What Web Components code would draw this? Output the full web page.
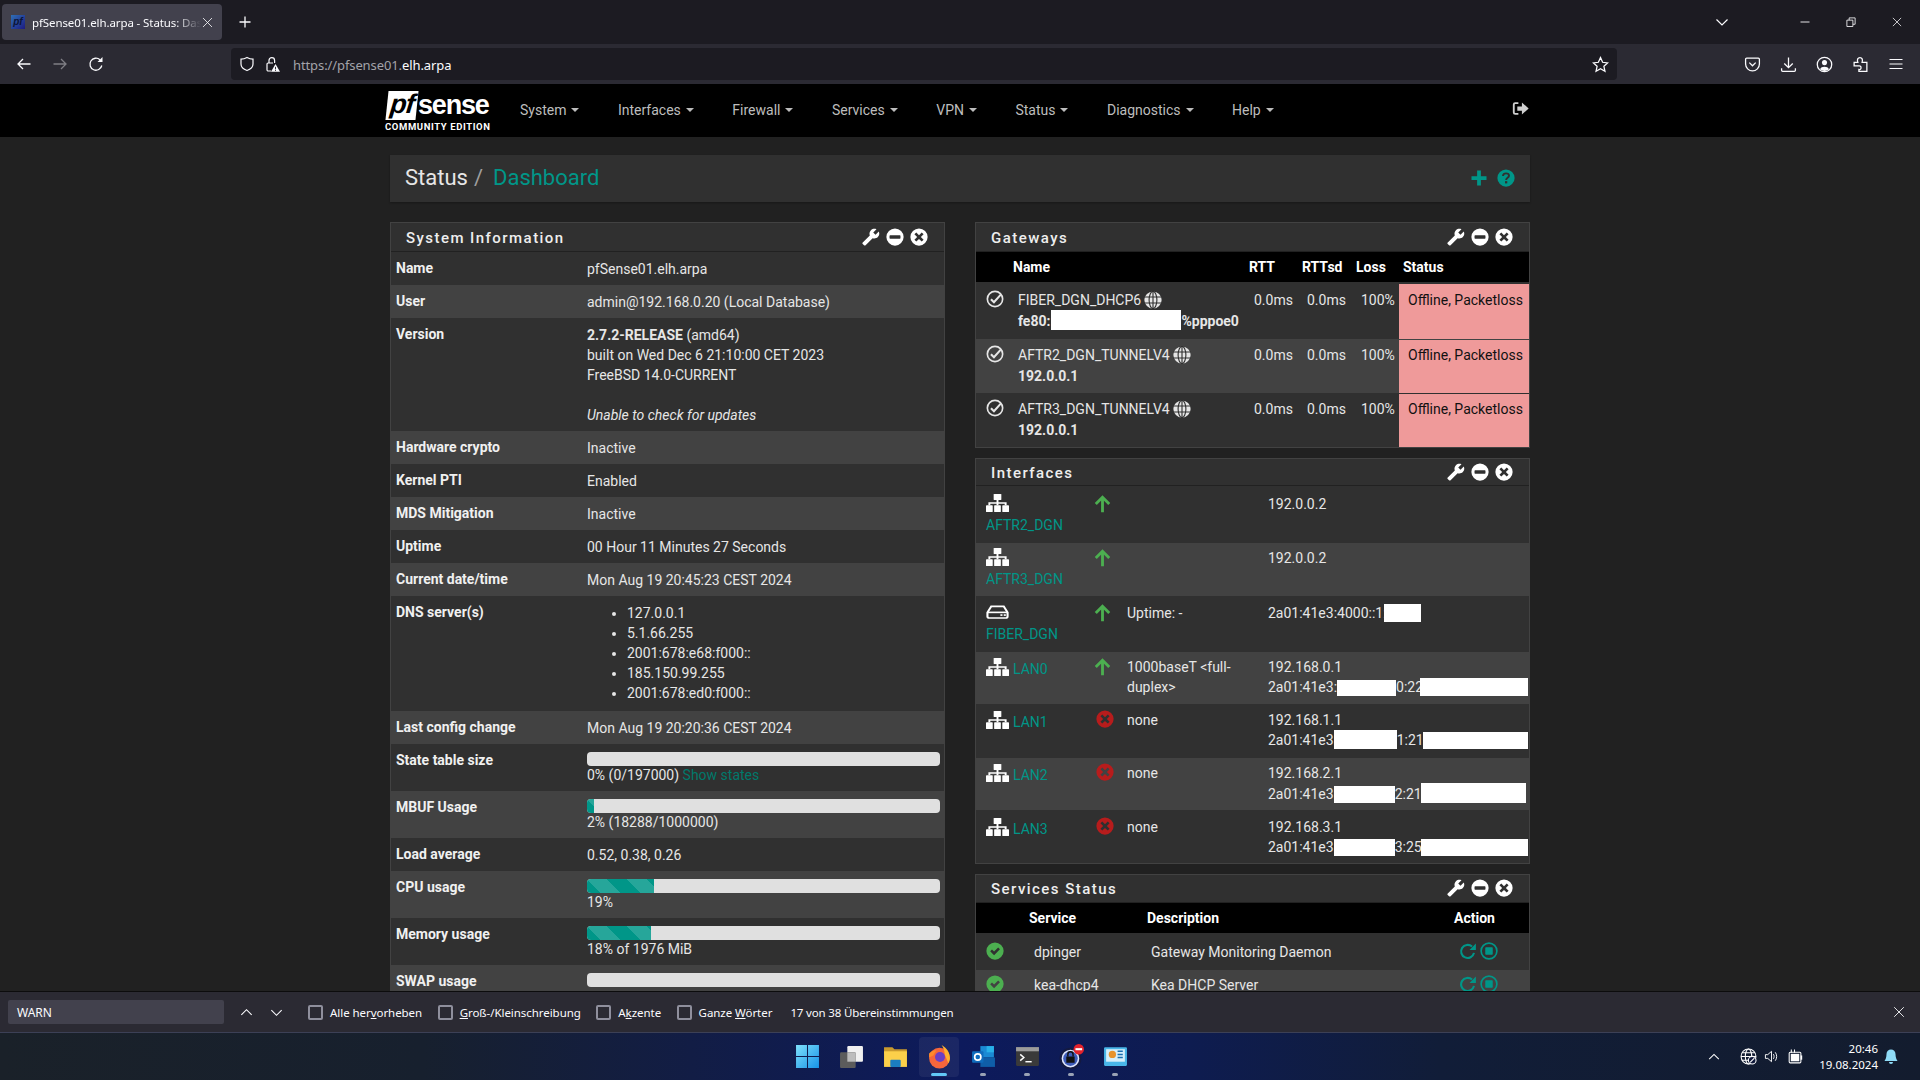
<!DOCTYPE html>
<html lang="de">
<head>
<meta charset="utf-8">
<title>pfSense01.elh.arpa - Status: Dashboard</title>
<style>
  html, body { margin: 0; height: 100%; overflow: hidden; background: #212121; }
  body { display: flex; flex-direction: column; font-family: Roboto, "Liberation Sans", sans-serif; }
</style>
</head>
<body>
<browser-tabs></browser-tabs>
<browser-toolbar></browser-toolbar>
<pf-page>
  <pf-navbar slot="nav"></pf-navbar>
  <pf-breadcrumb slot="crumb"></pf-breadcrumb>

  <pf-panel slot="left" heading="System Information">
    <info-row label="Name">pfSense01.elh.arpa</info-row>
    <info-row label="User">admin@192.168.0.20 (Local Database)</info-row>
    <info-row label="Version"><b>2.7.2-RELEASE</b> (amd64)<br>built on Wed Dec 6 21:10:00 CET 2023<br>FreeBSD 14.0-CURRENT<br><br><i>Unable to check for updates</i></info-row>
    <info-row label="Hardware crypto">Inactive</info-row>
    <info-row label="Kernel PTI">Enabled</info-row>
    <info-row label="MDS Mitigation">Inactive</info-row>
    <info-row label="Uptime">00 Hour 11 Minutes 27 Seconds</info-row>
    <info-row label="Current date/time">Mon Aug 19 20:45:23 CEST 2024</info-row>
    <info-row label="DNS server(s)" style="--h:115px"><pf-bullets items="127.0.0.1|5.1.66.255|2001:678:e68:f000::|185.150.99.255|2001:678:ed0:f000::"></pf-bullets></info-row>
    <info-row label="Last config change">Mon Aug 19 20:20:36 CEST 2024</info-row>
    <info-row label="State table size"><pf-progress value="0"></pf-progress>0% (0/197000) <pf-link>Show states</pf-link></info-row>
    <info-row label="MBUF Usage"><pf-progress value="2"></pf-progress>2% (18288/1000000)</info-row>
    <info-row label="Load average">0.52, 0.38, 0.26</info-row>
    <info-row label="CPU usage"><pf-progress value="19"></pf-progress>19%</info-row>
    <info-row label="Memory usage"><pf-progress value="18"></pf-progress>18% of 1976 MiB</info-row>
    <info-row label="SWAP usage"><pf-progress value="0" style="margin-bottom:2px"></pf-progress>0% of 1024 MiB</info-row>
  </pf-panel>

  <pf-panel slot="right" heading="Gateways">
    <gateway-head></gateway-head>
    <gateway-row name="FIBER_DGN_DHCP6" style="--h:57px;--pt:8px;--st:2px;--nb:0px">fe80:<pf-redact w="130" h="20" gap="1"></pf-redact>%pppoe0</gateway-row>
    <gateway-row name="AFTR2_DGN_TUNNELV4" style="--h:54px;--pt:6px;--st:1px">192.0.0.1</gateway-row>
    <gateway-row name="AFTR3_DGN_TUNNELV4" style="--h:54px;--pt:6px;--st:1px">192.0.0.1</gateway-row>
  </pf-panel>

  <pf-panel slot="right" heading="Interfaces" style="--hh:26px">
    <iface-row icon="sitemap" name="AFTR2_DGN" stack status="up" style="--h:57px;--pt:8px">192.0.0.2</iface-row>
    <iface-row icon="sitemap" name="AFTR3_DGN" stack status="up" style="--h:53px;--pt:5px">192.0.0.2</iface-row>
    <iface-row icon="hdd" name="FIBER_DGN" stack status="up" media="Uptime: -" style="--h:56px;--pt:7px">2a01:41e3:4000::1:<pf-redact w="37" h="18" gap="-3"></pf-redact></iface-row>
    <iface-row icon="sitemap" name="LAN0" status="up" media="1000baseT &amp;lt;full-duplex&amp;gt;" style="--h:52px;--pt:5px">192.168.0.1<br>2a01:41e3:<pf-redact w="59" h="16"></pf-redact>0:22<pf-redact w="108" h="18" gap="-3"></pf-redact></iface-row>
    <iface-row icon="sitemap" name="LAN1" status="down" media="none" style="--h:54px;--pt:6px">192.168.1.1<br>2a01:41e3<pf-redact w="63" h="19"></pf-redact>1:21<pf-redact w="105" h="17" gap="-1"></pf-redact></iface-row>
    <iface-row icon="sitemap" name="LAN2" status="down" media="none" style="--h:52px;--pt:5px">192.168.2.1<br>2a01:41e3<pf-redact w="61" h="17"></pf-redact>2:21<pf-redact w="105" h="20" gap="-1"></pf-redact></iface-row>
    <iface-row icon="sitemap" name="LAN3" status="down" media="none" style="--h:53px;--pt:7px">192.168.3.1<br>2a01:41e3<pf-redact w="61" h="17"></pf-redact>3:25<pf-redact w="107" h="17" gap="-1"></pf-redact></iface-row>
  </pf-panel>

  <pf-panel slot="right" heading="Services Status" style="--hh:27px">
    <service-head></service-head>
    <service-row name="dpinger" description="Gateway Monitoring Daemon" style="--pt:9px"></service-row>
    <service-row name="kea-dhcp4" description="Kea DHCP Server" style="--pt:5px"></service-row>
  </pf-panel>
</pf-page>
<find-bar></find-bar>
<win-taskbar></win-taskbar>

<script>
const ICONS = {
  // pfSense widgets, 24 box
  wrench: `<path fill="currentColor" transform="matrix(-1 0 0 1 24 0)" d="M23 19.3l-9.4-9.4c.9-2.3.4-5-1.5-6.9-2-2-5-2.4-7.4-1.3L9 6 6 9 1.6 4.7C.4 7.1.9 10.1 2.9 12.1c1.9 1.9 4.6 2.4 6.9 1.5l9.4 9.4c.6.6 1.5.6 2.1 0l1.7-1.7c.6-.5.6-1.4 0-2z"/>`,
  minus: `<path fill="currentColor" fill-rule="evenodd" d="M12 .5a11.5 11.5 0 1 0 0 23a11.5 11.5 0 0 0 0-23zM5.5 9.8h13a.8.8 0 0 1 .8.8v2.8a.8.8 0 0 1-.8.8h-13a.8.8 0 0 1-.8-.8v-2.8a.8.8 0 0 1 .8-.8z"/>`,
  times: `<path fill="currentColor" fill-rule="evenodd" d="M12 .5a11.5 11.5 0 1 0 0 23a11.5 11.5 0 0 0 0-23zM8.4 5.9L12 9.5l3.6-3.6l2.5 2.5L14.5 12l3.6 3.6l-2.500 2.500L12 14.500l-3.600 3.600l-2.500-2.500L9.500 12L5.900 8.400z"/>`,
  checkO: `<circle cx="12" cy="12" r="10.2" fill="none" stroke="currentColor" stroke-width="2.2"/><path d="M6.6 12.2l4 4L20 5.8" fill="none" stroke="currentColor" stroke-width="2.8"/>`,
  checkDisc: `<path fill="currentColor" fill-rule="evenodd" d="M12 .5a11.5 11.5 0 1 0 0 23a11.5 11.5 0 0 0 0-23zM5.6 12.4l2.4-2.4l2.8 2.8l5.4-5.4l2.4 2.4l-7.8 7.8z"/>`,
  globe: `<circle cx="12" cy="12" r="11.5" fill="currentColor"/><g fill="none" stroke="#303030" stroke-width="1.5"><ellipse cx="12" cy="12" rx="5.2" ry="11.5"/><path d="M12 0v24M0 8h24M0 16h24"/></g>`,
  sitemap: `<g fill="currentColor"><rect x="8" y="0" width="8" height="8" rx=".8"/><rect x="0" y="15" width="7" height="9" rx=".8"/><rect x="8.500" y="15" width="7" height="9" rx=".8"/><rect x="17" y="15" width="7" height="9" rx=".8"/><path d="M11 8h2v3h8.500v4h-2v-2H13v2h-2v-2H4.500v2h-2v-4H11z"/></g>`,
  hdd: `<path d="M5.500 4.500h13l4 8v5.500a2 2 0 0 1-2 2h-17a2 2 0 0 1-2-2v-5.500z" fill="none" stroke="currentColor" stroke-width="2.200"/><path d="M2 12.500h20" stroke="currentColor" stroke-width="2.200"/><rect x="15" y="15" width="2.200" height="2.200" fill="currentColor"/><rect x="18.500" y="15" width="2.200" height="2.200" fill="currentColor"/>`,
  arrowUp: `<path d="M12 23V4M3.500 12.500L12 4l8.500 8.500" fill="none" stroke="currentColor" stroke-width="3.600"/>`,
  plus: `<path fill="currentColor" d="M9.500 2h5v7.500H22v5h-7.500V22h-5v-7.500H2v-5h7.500z"/>`,
  question: `<circle cx="12" cy="12" r="11.500" fill="currentColor"/><path d="M8 9.300c0-2.200 1.700-3.500 4-3.500s4 1.300 4 3.200c0 2.800-3.800 2.600-3.800 5.500" fill="none" stroke="#303030" stroke-width="2.600"/><rect x="10.700" y="16.200" width="3" height="3" fill="#303030"/>`,
  repeat: `<path d="M20 14.500a8.700 8.700 0 1 1-2.600-8.400" fill="none" stroke="currentColor" stroke-width="2.800"/><path fill="currentColor" d="M22.500 2v8.500H14z"/>`,
  stopO: `<circle cx="12" cy="12" r="10.500" fill="none" stroke="currentColor" stroke-width="2.200"/><rect x="7" y="7" width="10" height="10" rx="1" fill="currentColor"/>`,
  signOut: `<path d="M9 4.500H4.500a2 2 0 0 0-2 2v11a2 2 0 0 0 2 2H9" fill="none" stroke="currentColor" stroke-width="2.600"/><path fill="currentColor" d="M7.500 9H14V3.500L23.500 12L14 20.500V15H7.500z"/>`,
  // browser chrome, 16 box
  back: `<path d="M14.500 8H2M7 3L2 8l5 5" fill="none" stroke="currentColor" stroke-width="1.300"/>`,
  forward: `<path d="M1.500 8H14M9 3l5 5-5 5" fill="none" stroke="currentColor" stroke-width="1.300"/>`,
  reload: `<path d="M13.800 9.500A6 6 0 1 1 12 3.800" fill="none" stroke="currentColor" stroke-width="1.300"/><path fill="currentColor" d="M14.500 1v5h-5z"/>`,
  shield: `<path d="M8 1.500c2 1.200 4 1.700 6 1.700v4.800c0 3-2.400 5.300-6 6.500-3.600-1.200-6-3.500-6-6.500V3.200c2 0 4-.5 6-1.700z" fill="none" stroke="currentColor" stroke-width="1.200"/>`,
  lockWarn: `<path d="M5 7V4.500a2.800 2.800 0 0 1 5.600 0V7M9 7H4.200A1.200 1.200 0 0 0 3 8.200v5.600A1.200 1.200 0 0 0 4.200 15H7" fill="none" stroke="currentColor" stroke-width="1.200"/><path fill="currentColor" d="M11.500 8l4.500 7.800H7z"/><rect x="11.100" y="10.800" width=".9" height="2.600" fill="#1c1b22"/><rect x="11.100" y="14" width=".9" height=".9" fill="#1c1b22"/>`,
  star: `<path d="M8 1.500l2 4.400 4.700.6-3.500 3.200 1 4.700L8 12l-4.200 2.400 1-4.700L1.300 6.500 6 5.900z" fill="none" stroke="currentColor" stroke-width="1.200"/>`,
  pocket: `<path d="M2.500 2h11a1 1 0 0 1 1 1v4.500a6.500 6.500 0 0 1-13 0V3a1 1 0 0 1 1-1z" fill="none" stroke="currentColor" stroke-width="1.200"/><path d="M5 6.200l3 3 3-3" fill="none" stroke="currentColor" stroke-width="1.200"/>`,
  download: `<path d="M8 1.500v9M4 7l4 4 4-4M1.500 11.500v2a1 1 0 0 0 1 1h11a1 1 0 0 0 1-1v-2" fill="none" stroke="currentColor" stroke-width="1.200"/>`,
  account: `<circle cx="8" cy="8" r="6.800" fill="none" stroke="currentColor" stroke-width="1.200"/><circle cx="8" cy="6.200" r="2.400" fill="currentColor"/><path fill="currentColor" d="M3.800 12.500c.6-1.800 2.200-2.500 4.200-2.500s3.600.7 4.200 2.500A6 6 0 0 1 8 14.200a6 6 0 0 1-4.200-1.700z"/>`,
  puzzle: `<path d="M2 6h3.500c-1-2.800 0-4.500 2-4.500s2.800 1.700 2 4.500H14v8.500H6.500v-1.800c1.500.3 2-.7 2-1.700s-.7-2-2-1.700H2z" fill="none" stroke="currentColor" stroke-width="1.200"/>`,
  menu: `<path d="M1.500 3.500h13M1.500 8h13M1.500 12.500h13" stroke="currentColor" stroke-width="1.200"/>`,
  chevronDown: `<path d="M2.500 5.500L8 11l5.500-5.500" fill="none" stroke="currentColor" stroke-width="1.200"/>`,
  chevronUp: `<path d="M2.500 10.500L8 5l5.500 5.500" fill="none" stroke="currentColor" stroke-width="1.200"/>`,
  close: `<path d="M2.500 2.500l11 11M13.500 2.500l-11 11" stroke="currentColor" stroke-width="1"/>`,
  min: `<path d="M2 8h12" stroke="currentColor" stroke-width="1.200"/>`,
  restore: `<path d="M2.500 5.500h8V14h-8zM5.500 5.500V2.500h8V11h-3" fill="none" stroke="currentColor" stroke-width="1.100"/>`,
  newTab: `<path d="M8 2.500v11M2.500 8h11" stroke="currentColor" stroke-width="1.300"/>`,
  // tray
  trayGlobe: `<circle cx="8" cy="8" r="7" fill="none" stroke="currentColor" stroke-width="1"/><ellipse cx="8" cy="8" rx="3" ry="7" fill="none" stroke="currentColor" stroke-width="1"/><path d="M1 8h14M2 4.500h12M2 11.500h12" stroke="currentColor" stroke-width="1"/><circle cx="11.500" cy="11.500" r="3.600" fill="#10193a" stroke="currentColor"/><path d="M9.500 13.500l4-4" stroke="currentColor"/>`,
  speaker: `<path d="M1.500 6h2.500l4-3.500v11L4 10H1.500z" fill="none" stroke="currentColor"/><path d="M10 5.500c1 1.500 1 3.500 0 5M12 3.500c2 2.500 2 6.500 0 9" fill="none" stroke="currentColor"/>`,
  battery: `<rect x="3" y="4" width="11" height="10" rx="1" fill="none" stroke="currentColor"/><rect x="4.500" y="5.500" width="8" height="7" fill="currentColor"/><path d="M5 1.500v3M8 1.500v3" stroke="currentColor"/><path d="M14.500 7v4" stroke="currentColor" stroke-width="1.500"/>`,
  bell: `<path fill="currentColor" d="M8 .5a4.500 4.500 0 0 1 4.500 4.500c0 3.500 1 5.500 2 7H1.500c1-1.500 2-3.500 2-7A4.500 4.500 0 0 1 8 .5zM6 13h4a2 2 0 0 1-4 0z"/>`,
};

class PfIcon extends HTMLElement {
  constructor() {
    super();
    this.attachShadow({ mode: 'open' });
  }

  connectedCallback() {
    const name = this.getAttribute('name');
    const size = this.getAttribute('size') || 18;
    const height = this.getAttribute('h') || size;
    const box = this.getAttribute('box') || 24;
    this.shadowRoot.innerHTML = `
      <style>
        :host { display: inline-block; width: ${size}px; height: ${height}px; line-height: 0; flex: none; }
        svg { width: 100%; height: 100%; display: block; }
      </style>
      <svg viewBox="0 0 ${box} ${box}" preserveAspectRatio="none" aria-hidden="true">${ICONS[name]}</svg>
    `;
  }
}
customElements.define('pf-icon', PfIcon);

class BrowserTabs extends HTMLElement {
  constructor() {
    super();
    this.attachShadow({ mode: 'open' });
  }

  connectedCallback() {
    this.shadowRoot.innerHTML = `
      <style>
        :host { display: flex; align-items: center; height: 44px; background: #1c1b22; color: #fbfbfe;
          font: 11.500px "Noto Sans", "Open Sans", sans-serif; flex: none; }
        .tab { display: flex; align-items: center; margin-left: 2px; width: 220px; height: 36px; box-sizing: border-box;
          padding: 0 8px 0 9px; background: #42414d; border-radius: 4px; }
        .fav { width: 14px; height: 14px; background: linear-gradient(135deg, #2f6fb5, #1c1a80); color: #0c1538;
          font: italic bold 10px "Liberation Sans", sans-serif; line-height: 14px; text-align: center; flex: none; }
        .title { margin-left: 7px; flex: 1; overflow: hidden; white-space: nowrap; letter-spacing: -.1px;
          -webkit-mask-image: linear-gradient(90deg, #000 85%, transparent); mask-image: linear-gradient(90deg, #000 85%, transparent); }
        .new { margin-left: 15px; }
        .right { margin-left: auto; display: flex; align-items: center; }
        .chev { margin-right: 69px; }
        .win { margin-right: 34px; }
        .win:last-child { margin-right: 17px; }
      </style>
      <div class="tab">
        <div class="fav">pf</div>
        <div class="title">pfSense01.elh.arpa - Status: Dashboard</div>
        <pf-icon name="close" box="16" size="13"></pf-icon>
      </div>
      <pf-icon class="new" name="newTab" box="16" size="16"></pf-icon>
      <div class="right">
        <pf-icon class="chev" name="chevronDown" box="16" size="16"></pf-icon>
        <pf-icon class="win" name="min" box="16" size="12"></pf-icon>
        <pf-icon class="win" name="restore" box="16" size="12"></pf-icon>
        <pf-icon class="win" name="close" box="16" size="12"></pf-icon>
      </div>
    `;
  }
}
customElements.define('browser-tabs', BrowserTabs);

class BrowserToolbar extends HTMLElement {
  constructor() {
    super();
    this.attachShadow({ mode: 'open' });
  }

  connectedCallback() {
    this.shadowRoot.innerHTML = `
      <style>
        :host { display: flex; align-items: center; height: 40px; background: #2b2a33; color: #fbfbfe; flex: none;
          font: 13px "Noto Sans", "Open Sans", sans-serif; }
        .nav { display: flex; align-items: center; gap: 20px; padding-left: 16px; width: 231px; box-sizing: border-box; }
        .dim { opacity: .4; }
        .url { display: flex; align-items: center; height: 32px; width: 1386px; background: #1c1b22; border-radius: 4px;
          padding: 0 8px 0 8px; box-sizing: border-box; }
        .lock { margin-left: 9px; }
        .addr { margin-left: 13px; color: #a3a3a9; flex: 1; letter-spacing: -.1px; padding-top: 1px; }
        .addr span { color: #fbfbfe; }
        .tools { display: flex; align-items: center; gap: 19px; margin-left: 127px; }
      </style>
      <div class="nav">
        <pf-icon name="back" box="16" size="16"></pf-icon>
        <pf-icon class="dim" name="forward" box="16" size="16"></pf-icon>
        <pf-icon name="reload" box="16" size="16"></pf-icon>
      </div>
      <div class="url">
        <pf-icon name="shield" box="16" size="16"></pf-icon>
        <pf-icon class="lock" name="lockWarn" box="16" size="16"></pf-icon>
        <div class="addr">https://pfsense01.<span>elh.arpa</span></div>
        <pf-icon name="star" box="16" size="17"></pf-icon>
      </div>
      <div class="tools">
        <pf-icon name="pocket" box="16" size="17"></pf-icon>
        <pf-icon name="download" box="16" size="17"></pf-icon>
        <pf-icon name="account" box="16" size="17"></pf-icon>
        <pf-icon name="puzzle" box="16" size="17"></pf-icon>
        <pf-icon name="menu" box="16" size="16"></pf-icon>
      </div>
    `;
  }
}
customElements.define('browser-toolbar', BrowserToolbar);

class PfPage extends HTMLElement {
  constructor() {
    super();
    this.attachShadow({ mode: 'open' });
  }

  connectedCallback() {
    this.shadowRoot.innerHTML = `
      <style>
        :host { display: block; flex: 1; min-height: 0; overflow: hidden; background: #212121; }
        .container { width: 1140px; margin: 18px auto 0; }
        .columns { display: grid; grid-template-columns: 555px 555px; column-gap: 30px; margin-top: 20px; }
        ::slotted([slot="right"]) { margin-bottom: 10px; }
      </style>
      <slot name="nav"></slot>
      <div class="container">
        <slot name="crumb"></slot>
        <div class="columns">
          <div><slot name="left"></slot></div>
          <div><slot name="right"></slot></div>
        </div>
      </div>
    `;
  }
}
customElements.define('pf-page', PfPage);

class PfNavbar extends HTMLElement {
  constructor() {
    super();
    this.attachShadow({ mode: 'open' });
  }

  connectedCallback() {
    const items = ['System', 'Interfaces', 'Firewall', 'Services', 'VPN', 'Status', 'Diagnostics', 'Help'];
    this.shadowRoot.innerHTML = `
      <style>
        :host { display: flex; align-items: center; height: 53px; background: #000; padding-left: 385px; padding-right: 391px;
          box-sizing: border-box; color: #bdbdbd; font: 14px Roboto, sans-serif; }
        .logo { width: 105px; height: 40px; display: flex; flex-direction: column; flex: none; margin-right: 30px; padding-top: 1px; }
        .mark { display: flex; align-items: center; height: 29px; margin-left: 2px; }
        .pf { width: 30px; height: 29px; background: #fff; color: #000; font: italic bold 27px/27px "Liberation Sans", sans-serif;
          text-align: center; letter-spacing: -1px; transform: skewX(-6deg); }
        .sense { color: #fff; font: bold 27px/29px "Liberation Sans", sans-serif; letter-spacing: -1.200px; margin-left: 1px; }
        .ce { color: #fff; font: bold 9.500px/11px "Roboto", sans-serif; letter-spacing: .6px; margin-top: 1px; white-space: nowrap; }
        nav { display: flex; gap: 38.500px; flex: 1; padding-bottom: 2px; }
        nav span { display: inline-flex; align-items: center; gap: 5px; white-space: nowrap; }
        nav span::after { content: ''; border-top: 4px solid #bdbdbd; border-left: 4px solid transparent; border-right: 4px solid transparent; }
        .out { color: #cfcfcf; margin-bottom: 4px; }
      </style>
      <div class="logo">
        <div class="mark"><div class="pf">pf</div><div class="sense">sense</div></div>
        <div class="ce">COMMUNITY EDITION</div>
      </div>
      <nav>${items.map((i) => `<span>${i}</span>`).join('')}</nav>
      <pf-icon class="out" name="signOut" size="17"></pf-icon>
    `;
  }
}
customElements.define('pf-navbar', PfNavbar);

class PfBreadcrumb extends HTMLElement {
  constructor() {
    super();
    this.attachShadow({ mode: 'open' });
  }

  connectedCallback() {
    this.shadowRoot.innerHTML = `
      <style>
        :host { display: flex; align-items: center; height: 47px; background: #303030; padding: 0 15px 2px; box-sizing: border-box; font: 22px Roboto, sans-serif;
          color: #e6e6e6; box-shadow: 0 1px 2px rgba(0,0,0,.3); }
        .sep { color: #9e9e9e; margin: 0 10px 0 6px; }
        .cur { color: #009688; flex: 1; }
        .tools { display: flex; gap: 9px; color: #009688; align-items: center; }
      </style>
      <span>Status</span><span class="sep">/</span><span class="cur">Dashboard</span>
      <div class="tools"><pf-icon name="plus" size="18"></pf-icon><pf-icon name="question" size="18"></pf-icon></div>
    `;
  }
}
customElements.define('pf-breadcrumb', PfBreadcrumb);

class PfPanel extends HTMLElement {
  constructor() {
    super();
    this.attachShadow({ mode: 'open' });
  }

  connectedCallback() {
    this.shadowRoot.innerHTML = `
      <style>
        :host { display: block; background: #303030; border: 1px solid #424242; box-sizing: border-box; color: #e6e6e6;
          font: 14px/20px Roboto, sans-serif; }
        header { display: flex; align-items: center; height: var(--hh, 28px); padding: 0 16px 0 15px; border-bottom: 1px solid #212121; }
        h2 { margin: 0; flex: 1; font: 500 15px Roboto, sans-serif; letter-spacing: 1.450px; color: #eee; padding-top: 1px; }
        .tools { display: flex; align-items: center; gap: 6px; color: #fff; margin-top: -1px; }
      </style>
      <header>
        <h2>${this.getAttribute('heading')}</h2>
        <div class="tools"><pf-icon name="wrench"></pf-icon><pf-icon name="minus"></pf-icon><pf-icon name="times"></pf-icon></div>
      </header>
      <slot></slot>
    `;
  }
}
customElements.define('pf-panel', PfPanel);

class InfoRow extends HTMLElement {
  constructor() {
    super();
    this.attachShadow({ mode: 'open' });
  }

  connectedCallback() {
    this.shadowRoot.innerHTML = `
      <style>
        :host { display: grid; grid-template-columns: 191px 1fr; box-sizing: border-box; min-height: var(--h, 33px);
          padding: 7px 4px 6px 5px; }
        :host(:nth-of-type(even)) { background: #424242; }
        .label { font-weight: 700; color: #f0f0f0; margin-top: -1px; }
        .value { min-width: 0; }
      </style>
      <div class="label">${this.getAttribute('label')}</div>
      <div class="value"><slot></slot></div>
    `;
  }
}
customElements.define('info-row', InfoRow);

class PfBullets extends HTMLElement {
  constructor() {
    super();
    this.attachShadow({ mode: 'open' });
  }

  connectedCallback() {
    const items = this.getAttribute('items').split('|');
    this.shadowRoot.innerHTML = `
      <style>
        :host { display: block; }
        ul { margin: 0; padding-left: 40px; }
      </style>
      <ul>${items.map((i) => `<li>${i}</li>`).join('')}</ul>
    `;
  }
}
customElements.define('pf-bullets', PfBullets);

class PfProgress extends HTMLElement {
  constructor() {
    super();
    this.attachShadow({ mode: 'open' });
  }

  connectedCallback() {
    const value = Number(this.getAttribute('value'));
    this.shadowRoot.innerHTML = `
      <style>
        :host { display: block; height: 14px; background: #e0e0e0; border-radius: 4px; overflow: hidden; margin: 1px 0 -1px; }
        .bar { height: 100%; width: ${value}%; background-color: #009688;
          background-image: linear-gradient(45deg, rgba(255,255,255,.15) 25%, transparent 25%, transparent 50%, rgba(255,255,255,.15) 50%, rgba(255,255,255,.15) 75%, transparent 75%, transparent);
          background-size: 40px 40px; }
      </style>
      <div class="bar"></div>
    `;
  }
}
customElements.define('pf-progress', PfProgress);

class PfLink extends HTMLElement {
  constructor() {
    super();
    this.attachShadow({ mode: 'open' }).innerHTML = `
      <style>:host { color: #00796b; }</style><slot></slot>
    `;
  }
}
customElements.define('pf-link', PfLink);

class PfRedact extends HTMLElement {
  constructor() {
    super();
    this.attachShadow({ mode: 'open' });
  }

  connectedCallback() {
    const gap = this.getAttribute('gap') || 0;
    this.shadowRoot.innerHTML = `
      <style>
        :host { display: inline-block; width: ${this.getAttribute('w')}px; height: ${this.getAttribute('h')}px; background: #fff;
          vertical-align: -4px; margin-left: ${gap}px; }
      </style>
    `;
  }
}
customElements.define('pf-redact', PfRedact);

class GatewayHead extends HTMLElement {
  constructor() {
    super();
    this.attachShadow({ mode: 'open' }).innerHTML = `
      <style>
        :host { display: grid; grid-template-columns: 32px 236px 53px 54px 48px 1fr; height: 30px; align-items: center;
          background: #000; color: #fff; font-weight: 700; }
        span { padding-left: 5px; }
      </style>
      <span></span><span>Name</span><span>RTT</span><span>RTTsd</span><span>Loss</span><span style="padding-left:4px">Status</span>
    `;
  }
}
customElements.define('gateway-head', GatewayHead);

class GatewayRow extends HTMLElement {
  constructor() {
    super();
    this.attachShadow({ mode: 'open' });
  }

  connectedCallback() {
    this.shadowRoot.innerHTML = `
      <style>
        :host { display: grid; grid-template-columns: 32px 236px 53px 54px 48px 1fr; height: var(--h, 54px); box-sizing: border-box; }
        :host(:nth-of-type(even)) { background: #424242; }
        .cell { padding: var(--pt, 5px) 0 0 10px; white-space: nowrap; }
        .ico { padding: var(--pt, 5px) 0 0 10px; }
        .name { display: flex; align-items: center; gap: 3px; height: 20px; margin-bottom: var(--nb, 1px); }
        .addr { font-weight: 700; }
        .status { margin-top: var(--st, 1px); background: #ef9a9a; color: #111; padding: calc(var(--pt, 5px) - var(--st, 1px)) 0 0 9px; white-space: nowrap; }
      </style>
      <div class="ico"><pf-icon name="checkO" size="18"></pf-icon></div>
      <div class="cell">
        <div class="name">${this.getAttribute('name')}<pf-icon name="globe" size="18"></pf-icon></div>
        <div class="addr"><slot></slot></div>
      </div>
      <div class="cell">0.0ms</div>
      <div class="cell">0.0ms</div>
      <div class="cell">100%</div>
      <div class="status">Offline, Packetloss</div>
    `;
  }
}
customElements.define('gateway-row', GatewayRow);

class IfaceRow extends HTMLElement {
  constructor() {
    super();
    this.attachShadow({ mode: 'open' });
  }

  connectedCallback() {
    const up = this.getAttribute('status') === 'up';
    const media = this.getAttribute('media') || '';
    const stack = this.hasAttribute('stack');
    this.shadowRoot.innerHTML = `
      <style>
        :host { display: grid; grid-template-columns: 117px 34px 141px 1fr; height: var(--h, 53px); box-sizing: border-box;
          padding-top: var(--pt, 6px); overflow: hidden; }
        :host(:nth-of-type(even)) { background: #424242; }
        .if { padding-left: 10px; color: #009688; ${stack ? '' : 'display: flex; gap: 4px; align-items: flex-start;'} }
        .if pf-icon { color: #fff; display: block; ${stack ? 'margin-bottom: 3px;' : 'margin-top: 1px;'} }
        .if span { display: block; ${stack ? '' : 'margin-top: 2px;'} }
        .up { color: #4caf50; }
        .down { color: #b71c1c; padding-left: 3px; }
        .media { padding-right: 4px; }
        .ip { white-space: nowrap; }
      </style>
      <div class="if"><pf-icon name="${this.getAttribute('icon')}" size="23" h="18"></pf-icon><span>${this.getAttribute('name')}</span></div>
      <div class="${up ? 'up' : 'down'}"><pf-icon name="${up ? 'arrowUp' : 'times'}" size="${up ? 19 : 18}"></pf-icon></div>
      <div class="media">${media}</div>
      <div class="ip"><slot></slot></div>
    `;
  }
}
customElements.define('iface-row', IfaceRow);

class ServiceHead extends HTMLElement {
  constructor() {
    super();
    this.attachShadow({ mode: 'open' }).innerHTML = `
      <style>
        :host { display: grid; grid-template-columns: 53px 118px 307px 1fr; height: 30px; align-items: center;
          background: #000; color: #fff; font-weight: 700; }
      </style>
      <span></span><span>Service</span><span>Description</span><span>Action</span>
    `;
  }
}
customElements.define('service-head', ServiceHead);

class ServiceRow extends HTMLElement {
  constructor() {
    super();
    this.attachShadow({ mode: 'open' });
  }

  connectedCallback() {
    this.shadowRoot.innerHTML = `
      <style>
        :host { display: grid; grid-template-columns: 58px 117px 308px 1fr; height: 37px; box-sizing: border-box; padding-top: var(--pt, 6px); }
        :host(:nth-of-type(even)) { background: #424242; }
        .ico { padding-left: 10px; color: #4caf50; line-height: 0; }
        .act { display: flex; gap: 3px; color: #009688; }
      </style>
      <div class="ico"><pf-icon name="checkDisc" size="18"></pf-icon></div>
      <div>${this.getAttribute('name')}</div>
      <div>${this.getAttribute('description')}</div>
      <div class="act"><pf-icon name="repeat" size="18"></pf-icon><pf-icon name="stopO" size="18"></pf-icon></div>
    `;
  }
}
customElements.define('service-row', ServiceRow);

class FindBar extends HTMLElement {
  constructor() {
    super();
    this.attachShadow({ mode: 'open' });
  }

  connectedCallback() {
    const opts = ['Alle her<u>v</u>orheben', '<u>G</u>roß-/Kleinschreibung', 'A<u>k</u>zente', 'Ganze <u>W</u>örter'];
    this.shadowRoot.innerHTML = `
      <style>
        :host { display: flex; align-items: center; height: 41px; background: #2b2a33; border-top: 1px solid #0c0c0d; box-sizing: border-box; flex: none;
          color: #fbfbfe; font: 11.500px "Noto Sans", "Open Sans", sans-serif; }
        .input { margin-left: 8px; width: 216px; height: 24px; box-sizing: border-box; padding-left: 9px; background: #42414d; border-radius: 2px;
          line-height: 25px; font-size: 12px; }
        .arrows { display: flex; gap: 15px; margin: 0 0 0 15px; }
        .opt { display: flex; align-items: center; gap: 7px; letter-spacing: -.05px; }
        .box { width: 15px; height: 15px; border: 2px solid #8f8f9d; border-radius: 2px; box-sizing: border-box; }
        .opts { display: flex; gap: 15.500px; margin-left: 24px; }
        .count { margin-left: 18px; flex: 1; letter-spacing: -.15px; }
        .x { margin-right: 14px; }
      </style>
      <div class="input">WARN</div>
      <div class="arrows"><pf-icon name="chevronUp" box="16" size="15"></pf-icon><pf-icon name="chevronDown" box="16" size="15"></pf-icon></div>
      <div class="opts">${opts.map((o) => `<div class="opt"><div class="box"></div><span>${o}</span></div>`).join('')}</div>
      <div class="count">17 von 38 Übereinstimmungen</div>
      <pf-icon class="x" name="close" box="16" size="14"></pf-icon>
    `;
  }
}
customElements.define('find-bar', FindBar);

class WinTaskbar extends HTMLElement {
  constructor() {
    super();
    this.attachShadow({ mode: 'open' });
  }

  connectedCallback() {
    this.shadowRoot.innerHTML = `
      <style>
        :host { display: flex; align-items: center; height: 48px; flex: none; color: #fff; box-sizing: border-box; border-top: 1px solid #3c4056;
          background: linear-gradient(90deg, #1a2129 0%, #17202e 22%, #0d1a5c 50%, #0e1c50 62%, #111d38 75%, #131c2e 100%);
          font: 12px "Noto Sans", "Open Sans", sans-serif; }
        .apps { display: flex; align-items: center; margin-left: 785px; }
        .app { position: relative; width: 44px; height: 40px; display: flex; align-items: center; justify-content: center; box-sizing: border-box; }
        .app svg { width: 25px; height: 25px; display: block; }
        .app.run::after { content: ''; position: absolute; bottom: 1px; left: 19px; width: 6px; height: 3px; border-radius: 2px; background: #9aa3b5; }
        .app.active { background: rgba(255,255,255,.06); border-radius: 4px; width: 40px; margin: 0 2px; }
        .app.active::after { content: ''; position: absolute; bottom: 1px; left: 12px; width: 16px; height: 3px; border-radius: 2px; background: #62c8f7; }
        .tray { margin-left: auto; display: flex; align-items: center; }
        .ic { margin-right: 7px; }
        .clock { text-align: right; line-height: 16px; margin: 0 5px 0 9px; font-size: 11.500px; }
        .bell { color: #8fdcf7; margin-right: 21px; }
      </style>
      <div class="apps">
        <div class="app"><svg viewBox="0 0 24 24"><defs><linearGradient id="w" x1="0" y1="0" x2="1" y2="1"><stop offset="0" stop-color="#7ee0fb"/><stop offset="1" stop-color="#1793e8"/></linearGradient></defs><path fill="url(#w)" d="M1 1h10.500v10.500H1zM12.500 1H23v10.500H12.500zM1 12.500h10.500V23H1zM12.500 12.500H23V23H12.500z"/></svg></div>
        <div class="app"><svg viewBox="0 0 24 24"><rect x="8" y="2" width="15" height="15" rx="1" fill="#f0f0f0"/><rect x="1" y="8" width="15" height="15" rx="1" fill="#5c5c5c"/><rect x="8" y="8" width="8" height="9" fill="#bcbcbc"/></svg></div>
        <div class="app"><svg viewBox="0 0 24 24"><path fill="#c99a2e" d="M1 3h8l2 2h12v4H1z"/><path fill="#fcd04a" d="M1 7h22v15H1z"/><rect x="7" y="15" width="10" height="7" rx="1" fill="#1b7ec2"/></svg></div>
        <div class="app active"><svg viewBox="0 0 24 24"><circle cx="12" cy="13.500" r="10" fill="#f6663b"/><path fill="#ffb02e" d="M14 1c5 3 8 7 8 12.500c0 2-.6 3.500-1.500 5L17 10c0-3-1-6-3-9z"/><path fill="#ff8a2a" d="M2 9c2-2 4-3 7-3l-3 5-4 2z"/><circle cx="12.500" cy="12.500" r="4.800" fill="#6b3fc4"/></svg></div>
        <div class="app run"><svg viewBox="0 0 24 24"><path fill="#1a8ad4" d="M9 2h13v11H9z"/><path fill="#28b0e8" d="M15 2h7v6h-7z"/><path fill="#0f5ea8" d="M9 13h14v9H9z"/><rect x="1" y="7" width="11" height="11" rx="1" fill="#0f6cbd"/><circle cx="6.500" cy="12.500" r="3" fill="none" stroke="#fff" stroke-width="1.600"/></svg></div>
        <div class="app run"><svg viewBox="0 0 24 24"><rect x="1" y="3" width="22" height="18" rx="1" fill="#3a3a3a"/><rect x="1" y="3" width="22" height="4" fill="#9c9c9c"/><path d="M5 10l3.500 3L5 16" fill="none" stroke="#fff" stroke-width="1.400"/><path d="M10 17h6" stroke="#fff" stroke-width="1.400"/></svg></div>
        <div class="app run"><svg viewBox="0 0 24 24"><circle cx="11" cy="14" r="9.500" fill="#dfe6fa" stroke="#141a40" stroke-width="2"/><circle cx="11" cy="14" r="7" fill="#3d5bb8"/><rect x="7" y="12" width="8" height="6" fill="#111"/><path d="M8.500 12V10a2.500 2.500 0 0 1 5 0v2" fill="none" stroke="#111" stroke-width="1.400"/><circle cx="19" cy="5" r="5" fill="#e3222c"/><rect x="15.800" y="4" width="6.400" height="2" fill="#fff"/></svg></div>
        <div class="app run"><svg viewBox="0 0 24 24"><rect x="1" y="3" width="22" height="18" rx="1" fill="#49b6e8"/><rect x="3" y="5" width="18" height="12" fill="#d6effa"/><circle cx="9" cy="10" r="3.500" fill="#e8932b"/><path d="M14 7h5M14 10h5M14 13h5" stroke="#1a6fb0" stroke-width="1.500"/></svg></div>
      </div>
      <div class="tray">
        <pf-icon class="ic" name="chevronUp" box="16" size="14" style="margin-right:19px"></pf-icon>
        <pf-icon class="ic" name="trayGlobe" box="16" size="17"></pf-icon>
        <pf-icon class="ic" name="speaker" box="16" size="15"></pf-icon>
        <pf-icon class="ic" name="battery" box="16" size="17"></pf-icon>
        <div class="clock">20:46<br>19.08.2024</div>
        <pf-icon class="bell" name="bell" box="16" size="16"></pf-icon>
      </div>
    `;
  }
}
customElements.define('win-taskbar', WinTaskbar);
</script>
</body>
</html>
